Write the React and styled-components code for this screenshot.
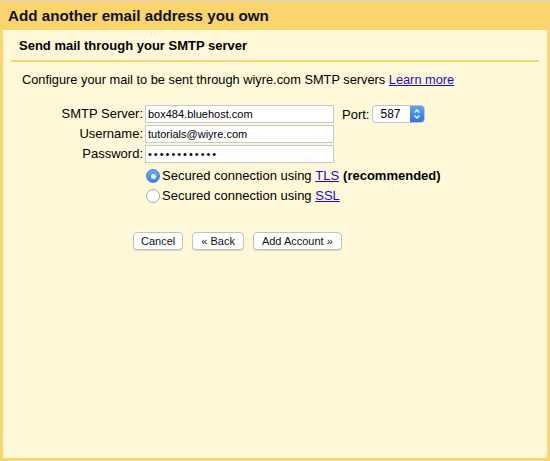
import React, { useState } from "react";
import styled, { createGlobalStyle } from "styled-components";

const GlobalStyle = createGlobalStyle`
  html, body {
    margin: 0;
    padding: 0;
    background: #ffffff;
  }
  body {
    font-family: "Liberation Sans", Arial, Helvetica, sans-serif;
    color: #000;
  }
`;

const Frame = styled.div`
  width: 550px;
  height: 461px;
  box-sizing: border-box;
  border-top: 1px solid #d8d8d8;
  background: #fad46d;
  display: flex;
  flex-direction: column;
  padding: 0 3px 3px 3px;
`;

const TitleBar = styled.div`
  height: 29px;
  display: flex;
  align-items: center;
  padding-left: 5px;
  font-size: 15.2px;
  font-weight: bold;
  color: #111;
`;

const Panel = styled.div`
  flex: 1;
  background: #fff8d8;
  display: flex;
  flex-direction: column;
`;

const SectionTitle = styled.div`
  height: 30px;
  margin: 0 8px;
  padding-left: 8px;
  display: flex;
  align-items: center;
  font-size: 13px;
  font-weight: bold;
  border-bottom: 2px solid #fad46d;
`;

const Intro = styled.div`
  padding: 10px 0 0 19px;
  font-size: 12.8px;
  line-height: 16px;
`;

const Link = styled.a`
  color: #1a0dcc;
  text-decoration: underline;
  cursor: pointer;
`;

const FormGrid = styled.div`
  margin-top: 17px;
  display: grid;
  grid-template-columns: 140px auto;
  column-gap: 2px;
  row-gap: 2px;
  align-items: center;
`;

const Label = styled.label`
  font-size: 13px;
  text-align: right;
  line-height: 18px;
`;

const FieldRow = styled.div`
  display: flex;
  align-items: center;
`;

const TextInput = styled.input`
  width: 189px;
  height: 18px;
  box-sizing: border-box;
  border: 1px solid #c9c9c9;
  background: #fff;
  padding: 0 2px;
  font-family: "Liberation Sans", Arial, sans-serif;
  font-size: 11px;
  color: #000;
  outline: none;
  letter-spacing: ${(p) => (p.type === "password" ? "2px" : "0")};
`;

const PortLabel = styled.span`
  font-size: 13px;
  margin: 0 3px 0 8px;
`;

const Select = styled.div`
  width: 53px;
  height: 18px;
  box-sizing: border-box;
  border: 1px solid #c4c4c4;
  border-radius: 4px;
  background: #fff;
  display: flex;
  align-items: stretch;
  overflow: hidden;
  font-size: 12px;
`;

const SelectValue = styled.span`
  flex: 1;
  display: flex;
  align-items: center;
  padding-left: 7px;
`;

const SelectArrow = styled.span`
  width: 14px;
  background: linear-gradient(#5aa2f7, #2e73e5);
  display: flex;
  align-items: center;
  justify-content: center;
`;

const Options = styled.div`
  grid-column: 2;
  display: flex;
  flex-direction: column;
  gap: 4px;
  margin-top: 3px;
`;

const RadioRow = styled.label`
  display: flex;
  align-items: center;
  font-size: 13px;
  line-height: 16px;
  cursor: pointer;
`;

const RadioDot = styled.span`
  width: 14px;
  height: 14px;
  box-sizing: border-box;
  border-radius: 50%;
  margin: 0 2px 0 1px;
  display: flex;
  align-items: center;
  justify-content: center;
  border: 1px solid ${(p) => (p.checked ? "#3a84e8" : "#a8a8a8")};
  background: ${(p) => (p.checked ? "linear-gradient(#66acf8, #3284ef)" : "#fff")};

  &::after {
    content: "";
    width: 5px;
    height: 5px;
    border-radius: 50%;
    background: #fff;
    display: ${(p) => (p.checked ? "block" : "none")};
  }
`;

const Bold = styled.b`
  margin-left: 4px;
`;

const ButtonBar = styled.div`
  display: flex;
  gap: 9px;
  padding-left: 130px;
  margin-top: 28px;
`;

const Button = styled.button`
  height: 18px;
  padding: 0 ${(p) => p.pad || 6}px;
  border: 1px solid #c2c2c2;
  border-radius: 4px;
  background: #fff;
  font-family: "Liberation Sans", Arial, sans-serif;
  font-size: 11px;
  color: #111;
  box-shadow: 0 1px 0 #e0d8b8;
  cursor: pointer;
`;

const ChevronIcon = () => (
  <svg width="8" height="12" viewBox="0 0 8 12">
    <path d="M1.5 4.5 L4 2 L6.5 4.5" fill="none" stroke="#fff" strokeWidth="1.4" />
    <path d="M1.5 7.5 L4 10 L6.5 7.5" fill="none" stroke="#fff" strokeWidth="1.4" />
  </svg>
);

export default function App() {
  const [secure, setSecure] = useState("tls");

  return (
    <>
      <GlobalStyle />
      <Frame>
        <TitleBar>Add another email address you own</TitleBar>
        <Panel>
          <SectionTitle>Send mail through your SMTP server</SectionTitle>
          <Intro>
            Configure your mail to be sent through wiyre.com SMTP servers{" "}
            <Link>Learn more</Link>
          </Intro>

          <FormGrid>
            <Label>SMTP Server:</Label>
            <FieldRow>
              <TextInput defaultValue="box484.bluehost.com" />
              <PortLabel>Port:</PortLabel>
              <Select>
                <SelectValue>587</SelectValue>
                <SelectArrow>
                  <ChevronIcon />
                </SelectArrow>
              </Select>
            </FieldRow>

            <Label>Username:</Label>
            <FieldRow>
              <TextInput defaultValue="tutorials@wiyre.com" />
            </FieldRow>

            <Label>Password:</Label>
            <FieldRow>
              <TextInput type="password" defaultValue="wiyrepass123" />
            </FieldRow>

            <Options>
              <RadioRow onClick={() => setSecure("tls")}>
                <RadioDot checked={secure === "tls"} />
                Secured connection using&nbsp;<Link>TLS</Link>
                <Bold>(recommended)</Bold>
              </RadioRow>
              <RadioRow onClick={() => setSecure("ssl")}>
                <RadioDot checked={secure === "ssl"} />
                Secured connection using&nbsp;<Link>SSL</Link>
              </RadioRow>
            </Options>
          </FormGrid>

          <ButtonBar>
            <Button pad={7}>Cancel</Button>
            <Button pad={8}>« Back</Button>
            <Button pad={8}>Add Account »</Button>
          </ButtonBar>
        </Panel>
      </Frame>
    </>
  );
}
